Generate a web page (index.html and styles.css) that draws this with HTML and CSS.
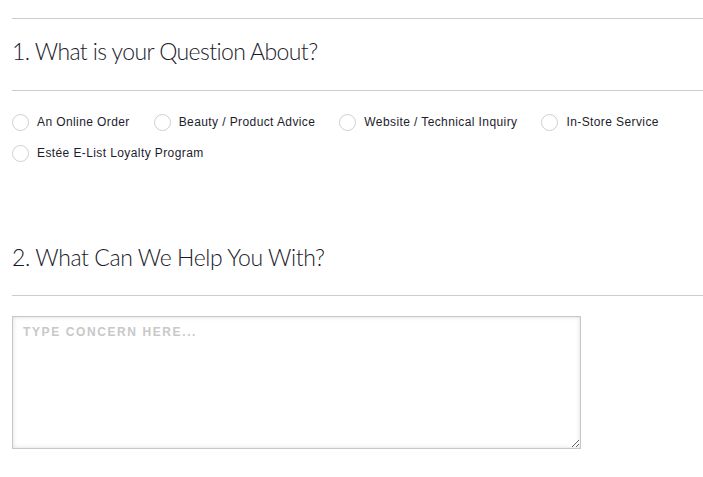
FILE: index.html
```html
<!DOCTYPE html>
<html>
<head>
<meta charset="utf-8">
<link rel="stylesheet" href="styles.css">
</head>
<body>
<div class="page">
  <section class="section">
    <div class="rule"></div>
    <h2 class="title">1. What is your Question About?</h2>
    <div class="rule"></div>
    <div class="options">
      <label class="opt"><span class="radio"></span>An Online Order</label>
      <label class="opt"><span class="radio"></span>Beauty / Product Advice</label>
      <label class="opt"><span class="radio"></span>Website / Technical Inquiry</label>
      <label class="opt"><span class="radio"></span>In-Store Service</label>
      <label class="opt"><span class="radio"></span>Estée E-List Loyalty Program</label>
    </div>
  </section>
  <section class="section second">
    <h2 class="title">2. What Can We Help You With?</h2>
    <div class="rule"></div>
    <textarea class="concern" placeholder="TYPE CONCERN HERE..."></textarea>
  </section>
</div>
</body>
</html>
```
FILE: styles.css
```css
html, body { margin: 0; padding: 0; background: #fff; }
.page { padding: 18px 0 0 12px; }
.rule { height: 1px; background: #cccccc; }
.title {
  margin: 0;
  font-family: Lato, "Open Sans", sans-serif;
  font-weight: 300;
  font-size: 23px;
  letter-spacing: -0.6px;
  line-height: 30px;
  color: #1a1a2a;
  padding: 17px 0 24px;
}
.options {
  display: flex;
  flex-wrap: wrap;
  column-gap: 24px;
  row-gap: 13px;
  padding-top: 22px;
}
.opt {
  display: flex;
  align-items: center;
  gap: 8px;
  font-family: "Liberation Sans", Arial, sans-serif;
  font-size: 12px;
  letter-spacing: 0.4px;
  color: #1c1c2c;
  line-height: 18px;
}
.radio {
  width: 17px;
  height: 17px;
  border: 1px solid #cfcfcf;
  border-radius: 50%;
  box-sizing: border-box;
}
.second { padding-top: 80px; }
.second .title { padding-top: 0; padding-bottom: 23px; letter-spacing: -0.4px; }
.concern {
  display: block;
  margin-top: 20px;
  width: 569px;
  height: 133px;
  box-sizing: border-box;
  border: 1px solid #c8c8c8;
  box-shadow: inset 0 0 4px rgba(0,0,0,0.15);
  padding: 8px 10px;
  font-family: "Liberation Sans", Arial, sans-serif;
  font-size: 12px;
  letter-spacing: 1.6px;
  resize: both;
  outline: none;
}
.concern::placeholder { color: #c8c8c8; font-weight: bold; opacity: 1; }
```
